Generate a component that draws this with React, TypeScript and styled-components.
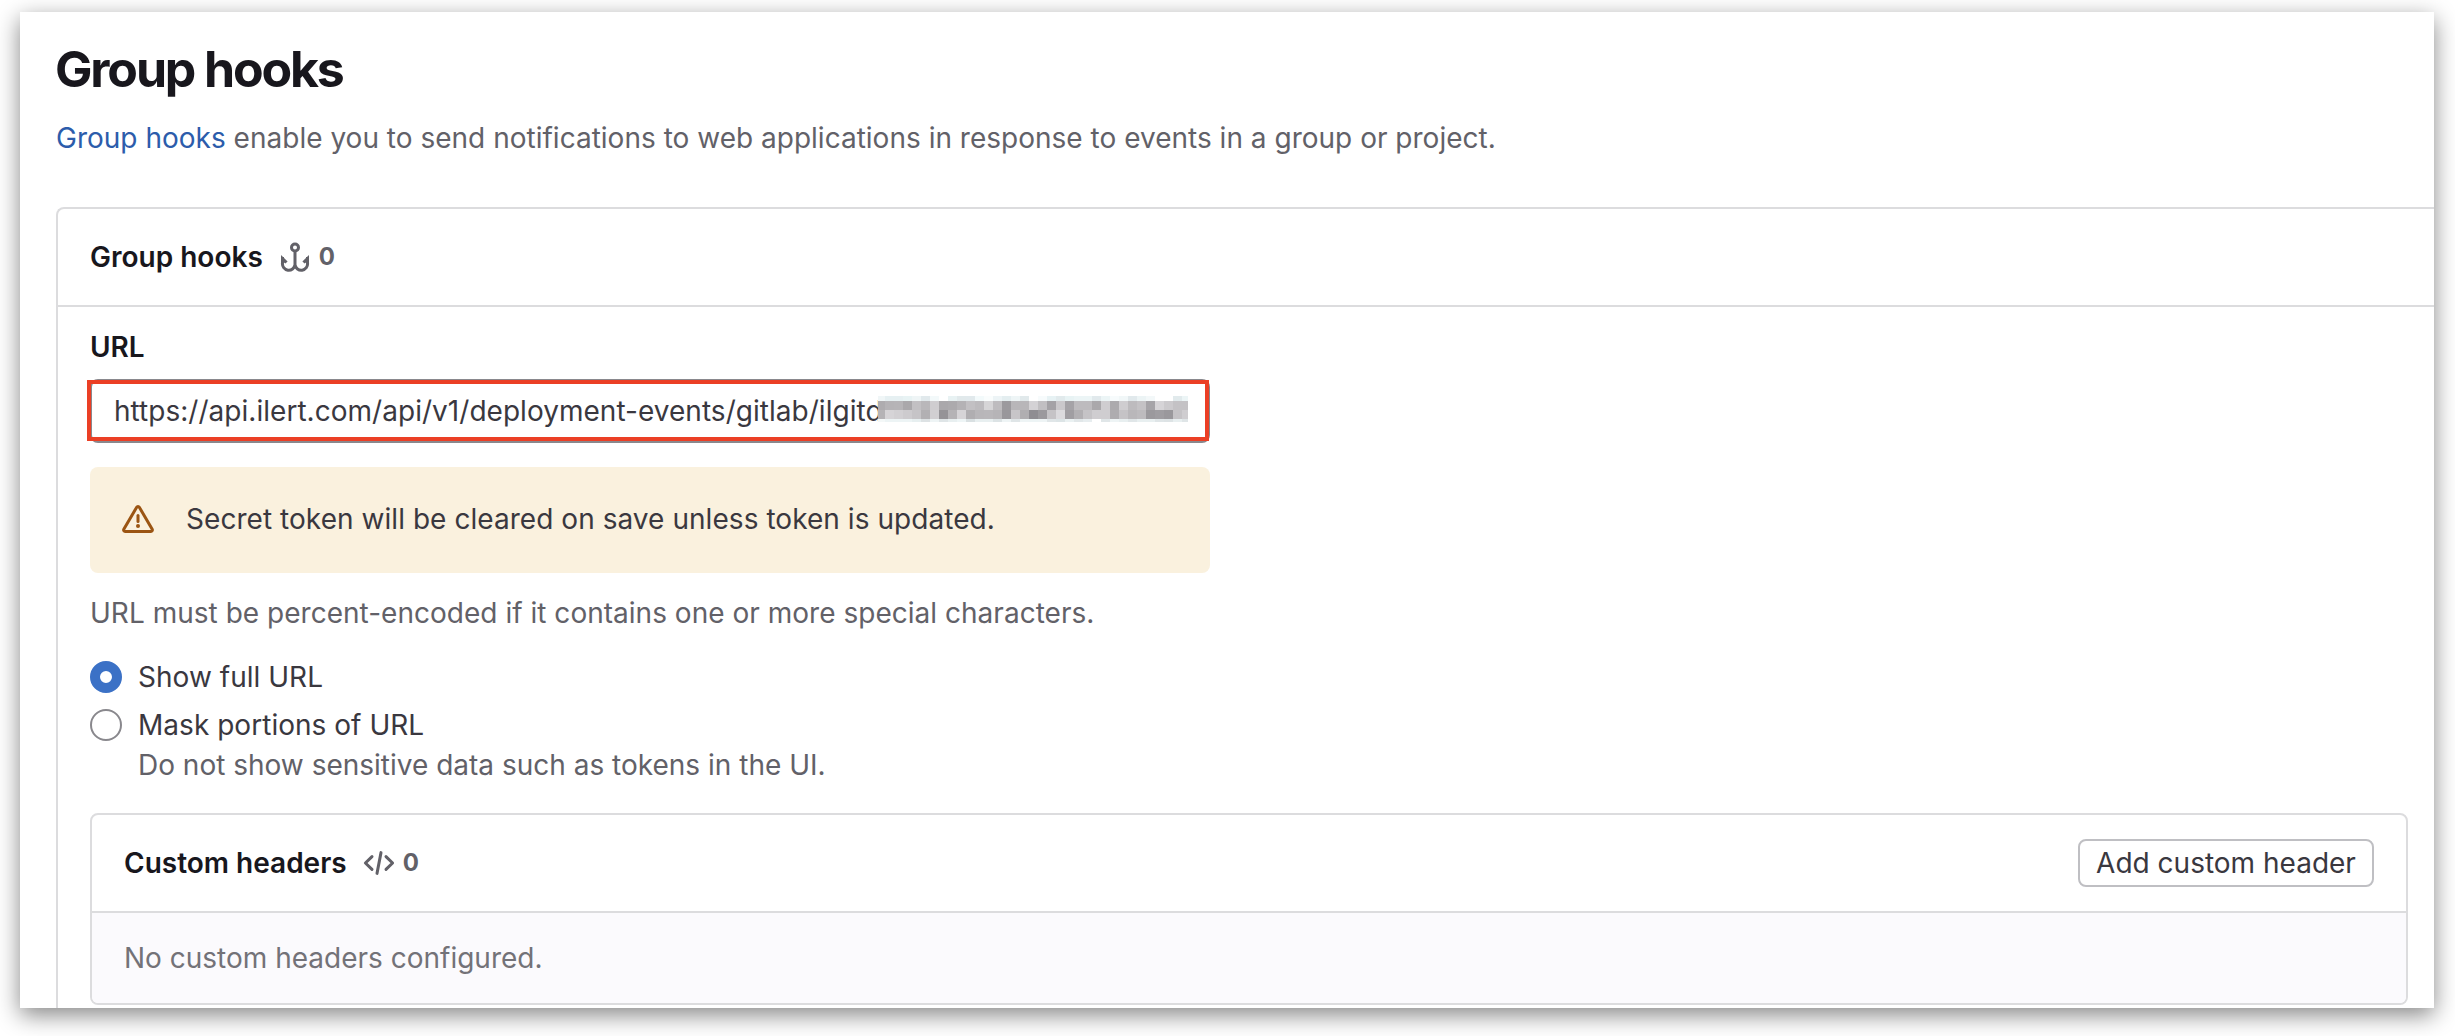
import React from "react";
import styled, { createGlobalStyle } from "styled-components";

const Global = createGlobalStyle`
  * { box-sizing: border-box; }
  body { margin: 0; background: #fff; width: 2455px; height: 1036px; overflow: hidden; }
`;

const Stage = styled.div`
  width: 2455px;
  height: 1036px;
  padding: 12px 21px 28px 20px;
  overflow: hidden;
  font-family: Inter, "Liberation Sans", sans-serif;
  font-size: 28px;
  line-height: 40px;
  color: #3a383f;
`;

const Window = styled.main`
  height: 996px;
  padding: 26px 0 0 36px;
  background: #fff;
  box-shadow: 0 7px 22px rgba(0, 0, 0, 0.48);
`;

const Content = styled.div`
  height: 970px;
  overflow: hidden;
`;

const Title = styled.h1`
  margin: 0;
  height: 62px;
  font-size: 50px;
  line-height: 62px;
  font-weight: 660;
  letter-spacing: -2.15px;
  text-indent: -1px;
  color: #18171d;
`;

const Lead = styled.p`
  margin: 18px 0 49px;
  letter-spacing: 0.01px;
  color: #626168;
`;

const Link = styled.a`
  color: #2c5cab;
`;

const Panel = styled.section`
  border: 2px solid #dcdcde;
  border-right: 0;
  border-bottom: 0;
  border-top-left-radius: 8px;
  height: 900px;
`;

const PanelHeader = styled.header`
  display: flex;
  align-items: center;
  height: 98px;
  padding: 0 32px;
  border-bottom: 2px solid #dcdcde;
`;

const PanelTitle = styled.h2`
  margin: 0 16px 0 0;
  font-size: 28px;
  line-height: 40px;
  font-weight: 640;
  color: #18171d;
`;

const Count = styled.span`
  display: flex;
  align-items: center;
  gap: 8px;
  font-size: 24px;
  font-weight: 660;
  color: #626168;
`;

const Form = styled.div`
  padding: 20px 26px 0 32px;
`;

const Label = styled.label`
  display: block;
  font-weight: 640;
  color: #18171d;
  margin-bottom: 12px;
`;

const UrlField = styled.div`
  position: relative;
  display: flex;
  align-items: center;
  width: 1120px;
  height: 64px;
  padding: 0 22px;
  border: 2px solid #89888d;
  border-radius: 8px;
`;

const UrlText = styled.span`
  width: 764px;
  overflow: hidden;
  white-space: nowrap;
  letter-spacing: 0.03px;
`;

const Highlight = styled.div`
  position: absolute;
  left: -5px;
  top: -1px;
  width: 1122px;
  height: 61px;
  border: 4px solid #eb3f25;
`;

const Mosaic = styled.div`
  position: absolute;
  left: 786px;
  top: 15px;
  width: 310px;
  height: 26px;
  background: #fff;
  display: grid;
  grid-template-rows: 5px 9px 9px 3px;
`;

const MosaicRow = styled.div`
  display: grid;
  grid-template-columns: 7px repeat(33, 9px) 6px;
`;

const Cell = styled.i<{ $tone: string }>`
  background: ${(p) => p.$tone};
`;

const Alert = styled.div`
  display: flex;
  align-items: center;
  gap: 32px;
  width: 1120px;
  height: 106px;
  margin-top: 24px;
  padding: 0 32px 2px;
  border-radius: 8px;
  letter-spacing: 0.05px;
  background: #faf1de;
`;

const Help = styled.p`
  margin: 20px 0 24px;
  letter-spacing: 0.02px;
  color: #626168;
`;

const Option = styled.label`
  display: flex;
  align-items: center;
  gap: 16px;
  height: 40px;
  margin-bottom: 8px;
  letter-spacing: 0.03px;
`;

const Radio = styled.span<{ $checked?: boolean }>`
  width: 32px;
  height: 32px;
  border-radius: 50%;
  background: #fff;
  border: ${(p) => (p.$checked ? "10px solid #3b71c6" : "2px solid #89888d")};
`;

const OptionHelp = styled.p`
  margin: -8px 0 28px 48px;
  color: #626168;
`;

const HeadersCard = styled.section`
  border: 2px solid #dcdcde;
  border-radius: 8px;
  overflow: hidden;
`;

const Button = styled.button`
  margin-left: auto;
  width: 296px;
  height: 48px;
  padding: 0;
  border: 2px solid #bfbfc3;
  border-radius: 8px;
  background: #fff;
  color: #3a383f;
  font: inherit;
`;

const Empty = styled.div`
  height: 90px;
  padding: 25px 32px;
  background: #fbfafd;
  color: #737278;
`;

const AnchorIcon = () => (
  <svg width="32" height="32" viewBox="0 0 16 16" fill="none" stroke="#626168" strokeWidth="1.5">
    <circle cx="8" cy="3.25" r="1.75" />
    <path d="M8 5v7.6M1.75 8v3a3.1 3.1 0 0 0 6.25.9 3.1 3.1 0 0 0 6.25-.9V8" />
    <path d="M1 7l3.3 3.2-1.1 1L1 9.6zM15 7l-3.3 3.2 1.1 1L15 9.6z" fill="#626168" stroke="none" />
  </svg>
);

const CodeIcon = () => (
  <svg width="32" height="32" viewBox="0 0 16 16" fill="none" stroke="#626168" strokeWidth="1.5" strokeLinecap="round" strokeLinejoin="round">
    <path d="M4.5 4.8L1.2 8l3.3 3.2M11.5 4.8L14.8 8l-3.3 3.2M9 2.8L7 13.2" />
  </svg>
);

const WarningIcon = () => (
  <svg width="32" height="32" viewBox="0 0 16 16" fill="none" stroke="#9b5513" strokeWidth="1.5" strokeLinejoin="round">
    <path d="M7.35 2.1a.75.75 0 0 1 1.3 0l6.45 11.05a.75.75 0 0 1-.65 1.1H1.55a.75.75 0 0 1-.65-1.1z" />
    <path d="M8 6.3v2.9" strokeLinecap="round" />
    <circle cx="8" cy="11.5" r="1" fill="#9b5513" stroke="none" />
  </svg>
);

const tones = [
  "f0f6f7 e6f0f2 e6f0f2 e8f3f4 eff5f6 e1e9ec f3f9fa ffffff e8f2f3 e1e9eb e1e9ec f3fafb fafdfd edf4f6 e4eef0 eef5f6 e1e9eb ffffff f7fbfc e7f2f4 e1eaec e8f3f4 ecf5f6 ecf5f6 e1e9ec ecf5f6 f7fbfc f1f7f8 e1e9ec ecf4f5 f3f8f9 ffffff ffffff e1eaec ecf5f6",
  "aeacaf b5b3b6 b6b4b7 aaa8ab c2c0c3 b9b7ba cfcdd0 aaa8ab acaaad b4b2b5 c2c0c3 bdbbbe d6d5d7 bebcbf 9c9a9e b8b6b9 b8b6b9 d4d2d5 c1bfc2 a4a2a6 cac8cb a5a3a7 bdbbbe bdbbbe aaa8ab cfcdd0 acaaad cfcdd0 bdbbbe c4c2c5 a6a4a8 d6d4d7 cccacd c4c2c5 c4c2c5",
  "b5b3b6 d6d4d7 d2d0d3 cdcbce c6c4c7 b2b0b3 d1cfd2 959397 b5b3b6 d6d4d7 b0aeb1 b8b6b9 b9b7ba b6b4b7 99979b c7c5c8 b0aeb1 8f8d92 9b999d c5c3c6 dbdadd a09ea2 b2b0b3 c5c3c6 cfcdd0 cfcdd0 aeacaf c5c3c6 b9b7ba bdbbbe 9b999d 9f9da1 9a989c c5c3c6 cfcdd0",
  "f4f8f8 edf4f5 edf4f5 edf4f5 e7eff0 dde2e4 eef4f5 dfe5e7 e8eff0 eef5f6 d9e0e2 e8eff0 e8eff0 dce3e5 eef4f5 dfe5e7 eef4f5 edf4f5 eef4f5 e0e6e8 dce4e6 eaf1f2 e1e7e9 e7edef ffffff e0e6e8 eef4f5 e8eff0 e0e6e8 e8eff0 e8eff0 dfe5e7 dde3e5 e8eff0 dfe5e7",
].map((row) => row.split(" ").map((c) => "#" + c));

export default function App() {
  return (
    <Stage>
      <Global />
      <Window>
        <Content>
          <Title>Group hooks</Title>
          <Lead>
            <Link>Group hooks</Link> enable you to send notifications to web applications in response to events in a group or project.
          </Lead>
          <Panel>
            <PanelHeader>
              <PanelTitle>Group hooks</PanelTitle>
              <Count><AnchorIcon />0</Count>
            </PanelHeader>
            <Form>
              <Label>URL</Label>
              <UrlField>
                <UrlText>https://api.ilert.com/api/v1/deployment-events/gitlab/ilgitd</UrlText>
                <Mosaic>
                  {tones.map((row, r) => (
                    <MosaicRow key={r}>
                      {row.map((tone, c) => <Cell key={c} $tone={tone} />)}
                    </MosaicRow>
                  ))}
                </Mosaic>
                <Highlight />
              </UrlField>
              <Alert>
                <WarningIcon />
                <span>Secret token will be cleared on save unless token is updated.</span>
              </Alert>
              <Help>URL must be percent-encoded if it contains one or more special characters.</Help>
              <Option><Radio $checked />Show full URL</Option>
              <Option><Radio />Mask portions of URL</Option>
              <OptionHelp>Do not show sensitive data such as tokens in the UI.</OptionHelp>
              <HeadersCard>
                <PanelHeader>
                  <PanelTitle>Custom headers</PanelTitle>
                  <Count><CodeIcon />0</Count>
                  <Button>Add custom header</Button>
                </PanelHeader>
                <Empty>No custom headers configured.</Empty>
              </HeadersCard>
            </Form>
          </Panel>
        </Content>
      </Window>
    </Stage>
  );
}
